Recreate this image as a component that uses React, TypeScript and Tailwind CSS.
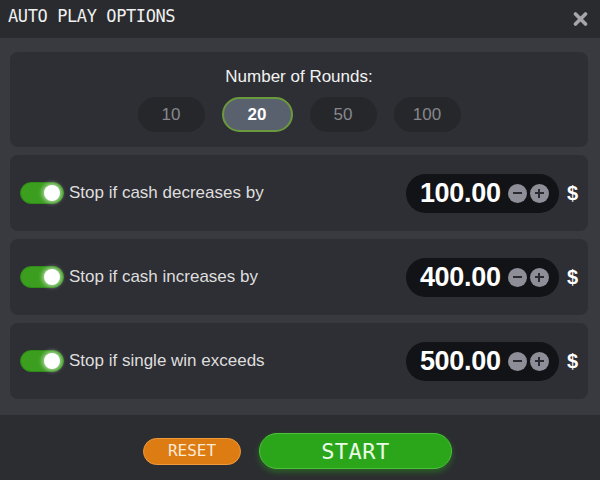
import { useState } from 'react';

const rounds = [10, 20, 50, 100];

const stops = [
  { label: 'Stop if cash decreases by', value: '100.00' },
  { label: 'Stop if cash increases by', value: '400.00' },
  { label: 'Stop if single win exceeds', value: '500.00' },
];

const Toggle = () => (
  <div className="relative h-[22px] w-[44px] shrink-0 rounded-full border border-[#2f8a17] bg-[#3b9e1e]">
    <div className="absolute right-[3px] top-[2px] h-[16px] w-[16px] rounded-full bg-white shadow-[0_0_4px_2px_rgba(255,255,255,0.55)]" />
  </div>
);

const StopRow = ({ label, value }: { label: string; value: string }) => (
  <div className="flex h-[76px] items-center rounded-lg bg-[#2e2f34] pl-[10px] pr-[10px]">
    <Toggle />
    <span className="ml-[5px] text-[17px] text-[#dedede]">{label}</span>
    <div className="ml-auto flex h-[39px] w-[153px] items-center rounded-full bg-[#121316] pl-[14px] pr-[10px]">
      <span className="text-[27px] font-bold leading-none tracking-[-0.3px] text-white">{value}</span>
      <div className="ml-auto flex gap-[3px]">
        <span className="flex h-[19px] w-[19px] items-center justify-center rounded-full bg-[#8d8e98]">
          <span className="h-[2px] w-[9px] bg-[#2a2b30]" />
        </span>
        <span className="relative flex h-[19px] w-[19px] items-center justify-center rounded-full bg-[#8d8e98]">
          <span className="h-[2px] w-[9px] bg-[#2a2b30]" />
          <span className="absolute h-[9px] w-[2px] bg-[#2a2b30]" />
        </span>
      </div>
    </div>
    <span className="ml-[8px] text-[20px] font-bold text-white">$</span>
  </div>
);

export default function App() {
  const [active, setActive] = useState(20);

  return (
    <div className="flex h-[480px] w-[600px] flex-col bg-[#393a3f] font-['Liberation_Sans',Arial,sans-serif]">
      <header className="flex h-[38px] shrink-0 items-center justify-between bg-[#2a2b2f] pb-1 pl-[8px] pr-[12px]">
        <h1 className="font-['DejaVu_Sans_Mono',monospace] text-[17px] tracking-[-0.4px] text-[#f0f0f0]">
          AUTO PLAY OPTIONS
        </h1>
        <svg width="15" height="14" viewBox="0 0 15 14" className="mt-1">
          <path d="M2.5 2 L12.5 12 M12.5 2 L2.5 12" stroke="#a6a6aa" strokeWidth="3.6" strokeLinecap="round" />
        </svg>
      </header>

      <main className="flex flex-1 flex-col gap-[8px] pl-[10px] pr-[12px] pt-[14px]">
        <section className="flex h-[95px] flex-col items-center rounded-lg bg-[#2e2f34] pt-[14px]">
          <p className="text-[17px] leading-[22px] text-[#f2f2f2]">Number of Rounds:</p>
          <div className="mt-[9px] flex gap-[17px]">
            {rounds.map((r) => (
              <button
                key={r}
                onClick={() => setActive(r)}
                className={
                  r === active
                    ? 'h-[35px] w-[71px] rounded-full border-2 border-[#6b9a3c] bg-[#5a616e] text-[17px] font-semibold text-white'
                    : 'h-[35px] w-[67px] rounded-full bg-[#26272b] text-[17px] text-[#86878c]'
                }
              >
                {r}
              </button>
            ))}
          </div>
        </section>

        {stops.map((s) => (
          <StopRow key={s.label} label={s.label} value={s.value} />
        ))}
      </main>

      <footer className="flex h-[65px] shrink-0 items-center justify-center gap-[18px] bg-[#2c2d31] pr-[5px] pt-[7px]">
        <button className="h-[27px] w-[98px] rounded-full border border-[#f09a3c] bg-[#dd7c12] font-['DejaVu_Sans_Mono',monospace] text-[16px] text-[#fbe9d6]">
          RESET
        </button>
        <button className="h-[36px] w-[193px] rounded-full border border-[#4cc23a] bg-[#2ba61b] font-['DejaVu_Sans_Mono',monospace] text-[22px] tracking-[0.5px] text-[#eafbe6] shadow-[0_3px_6px_rgba(43,166,27,0.45)]">
          START
        </button>
      </footer>
    </div>
  );
}
